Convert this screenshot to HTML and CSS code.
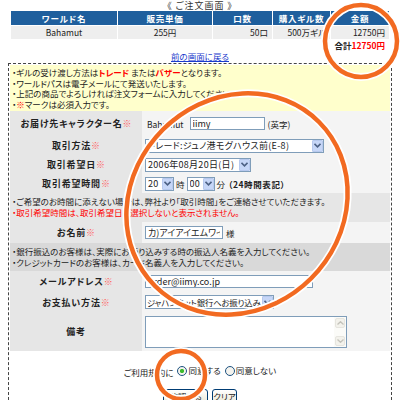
FILE: index.html
```html
<!DOCTYPE html>
<html lang="ja">
<head>
<meta charset="utf-8">
<title>ご注文画面</title>
<link rel="stylesheet" href="styles.css">
</head>
<body>
<div class="page">
  <div class="title">《 ご注文画面 》</div>
  <table class="order">
    <colgroup><col class="c1"><col class="c2"><col class="c3"><col class="c4"><col class="c5"></colgroup>
    <thead>
      <tr><th>ワールド名</th><th>販売単価</th><th>口数</th><th>購入ギル数</th><th>金額</th></tr>
    </thead>
    <tbody>
      <tr><td class="center">Bahamut</td><td class="center">255円</td><td class="num">50口</td><td class="num">500万ギル</td><td class="num">12750円</td></tr>
    </tbody>
  </table>
  <div class="total">合計<span class="red">12750円</span></div>
  <div class="back"><a href="#">前の画面に戻る</a></div>

  <div class="box">
    <div class="notice">
      <p>・ギルの受け渡し方法は<b class="red">トレード</b> または<b class="red">バザー</b>となります。</p>
      <p>・ワールドパスは電子メールにて発送いたします。</p>
      <p>・上記の商品でよろしければ注文フォームに入力してください。</p>
      <p>・<span class="red">※</span>マークは必須入力です。</p>
    </div>

    <div class="form">
      <div class="label h25">お届け先キャラクター名<span class="req">※</span></div>
      <div class="value"><span class="world">Bahamut</span><input class="text w-char" type="text" value="iimy"><span>(英字)</span></div>

      <div class="label h19">取引方法 <span class="req">※</span></div>
      <div class="value">
        <span class="select w-method"><select><option>トレード:ジュノ港モグハウス前(E-8)</option></select><span class="arrow"><svg width="7" height="5" viewBox="0 0 7 5"><path d="M0.5 0.8 L3.5 3.8 L6.5 0.8" fill="none" stroke="#4d6185" stroke-width="1.6"/></svg></span></span>
      </div>

      <div class="label h19">取引希望日<span class="req">※</span></div>
      <div class="value">
        <span class="select w-date"><select><option>2006年08月20日(日)</option></select><span class="arrow"><svg width="7" height="5" viewBox="0 0 7 5"><path d="M0.5 0.8 L3.5 3.8 L6.5 0.8" fill="none" stroke="#4d6185" stroke-width="1.6"/></svg></span></span>
      </div>

      <div class="label h19">取引希望時間 <span class="req">※</span></div>
      <div class="value tight">
        <span class="select w-hour"><select><option>20</option></select><span class="arrow"><svg width="7" height="5" viewBox="0 0 7 5"><path d="M0.5 0.8 L3.5 3.8 L6.5 0.8" fill="none" stroke="#4d6185" stroke-width="1.6"/></svg></span></span>
        <span>時</span>
        <span class="select w-min"><select><option>00</option></select><span class="arrow"><svg width="7" height="5" viewBox="0 0 7 5"><path d="M0.5 0.8 L3.5 3.8 L6.5 0.8" fill="none" stroke="#4d6185" stroke-width="1.6"/></svg></span></span>
        <span>分</span>
        <b class="hint">（24時間表記）</b>
      </div>

      <div class="note">
        <p>・ご希望のお時間に添えない場合は、弊社より「取引時間」をご連絡させていただきます。</p>
        <p class="red">・取引希望時間は、取引希望日を選択しないと表示されません。</p>
      </div>

      <div class="label h21">お名前<span class="req">※</span></div>
      <div class="value"><input class="text w-name" type="text" value="カ)アイアイエムワイ"><span>様</span></div>

      <div class="note dark">
        <p>・銀行振込のお客様は、実際にお振り込みする時の振込人名義を入力してください。</p>
        <p>・クレジットカードのお客様は、カード名義人を入力してください。</p>
      </div>

      <div class="label h21">メールアドレス<span class="req">※</span></div>
      <div class="value"><input class="text w-mail" type="text" value="order@iimy.co.jp"></div>

      <div class="label h20">お支払い方法<span class="req">※</span></div>
      <div class="value">
        <span class="select w-pay"><select class="narrow"><option>ジャパンネット銀行へお振り込み</option></select><span class="arrow"><svg width="7" height="5" viewBox="0 0 7 5"><path d="M0.5 0.8 L3.5 3.8 L6.5 0.8" fill="none" stroke="#4d6185" stroke-width="1.6"/></svg></span></span>
      </div>

      <div class="label h39">備考</div>
      <div class="value">
        <div class="textarea">
          <textarea></textarea>
          <div class="scroll">
            <span class="sb"><svg width="7" height="4" viewBox="0 0 7 4"><path d="M0.5 3.5 L3.5 0.7 L6.5 3.5" fill="none" stroke="#c4c3bb" stroke-width="1.3"/></svg></span>
            <span class="sb"><svg width="7" height="4" viewBox="0 0 7 4"><path d="M0.5 0.5 L3.5 3.3 L6.5 0.5" fill="none" stroke="#c4c3bb" stroke-width="1.3"/></svg></span>
          </div>
        </div>
      </div>
    </div>

    <div class="agree">
      ご利用規約に <label><input type="radio" name="agree" checked>同意する</label> <label><input type="radio" name="agree">同意しない</label>
    </div>
    <div class="buttons">
      <button class="btn-confirm" type="button">確認する</button>
      <button class="btn-clear" type="button">クリア</button>
    </div>
  </div>
</div>

<svg class="marks" width="400" height="400" viewBox="0 0 400 400">
  <g fill="none">
    <circle cx="361" cy="41" r="36" stroke="#fff" stroke-width="8"/>
    <circle cx="361" cy="41" r="36" stroke="#f26a21" stroke-width="4.5"/>
    <ellipse cx="237" cy="204" rx="116" ry="105" transform="rotate(-45 237 204)" stroke="#fff" stroke-width="8"/>
    <ellipse cx="237" cy="204" rx="116" ry="105" transform="rotate(-45 237 204)" stroke="#f26a21" stroke-width="4.5"/>
    <circle cx="181" cy="375" r="24" stroke="#fff" stroke-width="8"/>
    <circle cx="181" cy="375" r="24" stroke="#f26a21" stroke-width="4.5"/>
  </g>
</svg>
</body>
</html>
```

FILE: styles.css
```css
* { box-sizing: border-box; }
html, body { margin: 0; padding: 0; background: #fff; }
body {
  font-family: "Noto Sans CJK JP", "Noto Sans", sans-serif;
  font-size: 8.5px;
  color: #222;
  font-feature-settings: "palt";
}
p { margin: 0; }
.red { color: #f00; }
.page { margin: 0 8px; }

.title {
  height: 10px;
  padding-top: 1px;
  line-height: 9px;
  text-align: center;
  color: #333;
  font-size: 9px;
  letter-spacing: 1px;
}

.order {
  width: 380px;
  margin: 0 2px;
  border-collapse: separate;
  border-spacing: 1px;
  table-layout: fixed;
}
.order .c1 { width: 106px; }
.order .c2 { width: 94px; }
.order .c3 { width: 59px; }
.order .c4 { width: 57px; }
.order .c5 { width: 58px; }
.order th {
  height: 14px;
  padding: 0;
  background: #1f5f9d;
  color: #fff;
  font-weight: bold;
  letter-spacing: 0.8px;
  line-height: 14px;
}
.order td { height: 13px; padding: 0 4px 0 0; background: #eeeeee; line-height: 13px; }
.order td.center { text-align: center; padding: 0; }
.order td.num { text-align: right; }

.total { height: 10px; line-height: 10px; text-align: right; padding-right: 7px; font-weight: bold; }
.back { height: 13px; line-height: 13px; text-align: center; }
.back a { color: #1a3acc; text-decoration: underline; }

.box { border: 1px dashed #444; padding: 1px; }
.notice { background: #ffffcc; padding: 2px; height: 46px; }
.notice p { line-height: 10.5px; }

.form { display: grid; grid-template-columns: 132px 1fr; }
.label {
  background: #e6e6e6;
  display: flex;
  align-items: center;
  justify-content: center;
  font-weight: bold;
  font-size: 9px;
  letter-spacing: 0.8px;
  color: #222;
}
.req { color: #ff5c5c; font-weight: normal; letter-spacing: 0; }
.value {
  background: #f4f4f4;
  display: flex;
  align-items: center;
  padding-left: 3px;
  gap: 3px;
}
.value.tight { gap: 2px; }
.hint { letter-spacing: 0.6px; margin-left: 1px; }
.h19 { height: 19px; }
.h20 { height: 20px; }
.h21 { height: 21px; }
.h25 { height: 25px; }
.h39 { height: 39px; }
.note { grid-column: 1 / -1; padding: 2.5px 2px; background: #e6e6e6; height: 29px; }
.note p { line-height: 11px; }
.note.dark { background: #d9d9d9; height: 28px; }

.world { margin-left: 2px; margin-right: 3px; }
.text {
  height: 13px;
  border: 1px solid #7f9db9;
  font: inherit;
  font-size: 9px;
  font-feature-settings: "palt";
  color: #222;
  padding: 0 2px;
  background: #fff;
  outline: none;
}
.w-char { width: 75px; }
.w-name { width: 78px; }
.w-mail { width: 168px; }

.select {
  display: inline-flex;
  align-items: center;
  height: 14px;
  border: 1px solid #7f9db9;
  background: #fff;
}
.select select {
  appearance: none;
  -webkit-appearance: none;
  border: 0;
  outline: none;
  background: transparent;
  font: inherit;
  font-size: 9px;
  letter-spacing: 0.3px;
  font-feature-settings: "palt";
  color: #222;
  padding: 0 2px;
  flex: 1;
  min-width: 0;
  height: 12px;
  line-height: 12px;
}
.select select.narrow { font-size: 8.4px; letter-spacing: -0.2px; padding: 0 1px; }
.select .arrow {
  width: 11px;
  height: 12px;
  border: 1px solid #b7c9ee;
  border-radius: 1px;
  background: #c6d6f7;
  display: flex;
  align-items: center;
  justify-content: center;
}
.w-method { width: 179px; }
.w-date { width: 106px; }
.w-hour { width: 29px; }
.w-min { width: 28px; }
.w-pay { width: 129px; }

.textarea {
  display: flex;
  width: 202px;
  height: 32px;
  border: 1px solid #7f9db9;
  background: #fff;
}
.textarea textarea { flex: 1; border: 0; resize: none; outline: none; background: #fff; }
.scroll {
  width: 12px;
  display: flex;
  flex-direction: column;
  justify-content: space-between;
  padding: 1px;
  background: #fbfbf8;
}
.sb {
  height: 10px;
  border: 1px solid #e6e5df;
  border-radius: 2px;
  background: #f3f2ec;
  display: flex;
  align-items: center;
  justify-content: center;
}

.agree { padding-top: 14px; line-height: 11px; text-align: center; color: #222; }
.agree label { display: inline-flex; align-items: center; }
.agree input {
  appearance: none;
  -webkit-appearance: none;
  width: 10px;
  height: 10px;
  margin: 0 1px 0 2px;
  border: 1px solid #1c5180;
  border-radius: 50%;
  background: #f4f3ee;
}
.agree input:checked { background: radial-gradient(circle, #3dbb2e 0 1.8px, #f4f3ee 2.4px); }

.buttons { margin-top: 11px; display: flex; justify-content: center; gap: 4px; }
.buttons button {
  height: 14px;
  line-height: 12px;
  padding: 0;
  font: inherit;
  font-feature-settings: "palt";
  color: #222;
  border: 1px solid #003c74;
  border-radius: 3px;
  background: linear-gradient(#ffffff, #ece9d8);
}
.btn-confirm { width: 45px; }
.btn-clear { width: 25px; }

.marks { position: absolute; top: 0; left: 0; pointer-events: none; }
```
